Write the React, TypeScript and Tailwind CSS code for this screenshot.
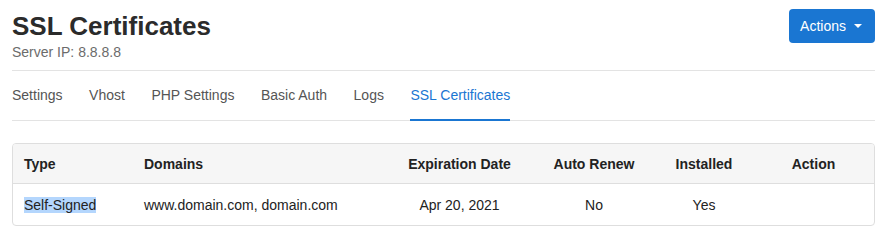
export default function App() {
  const tabs = ["Settings", "Vhost", "PHP Settings", "Basic Auth", "Logs", "SSL Certificates"];
  const active = "SSL Certificates";

  return (
    <div className="min-h-screen bg-white pl-3 pr-[14px] font-['Liberation_Sans',Arial,sans-serif] text-[#222]">
      {/* Header */}
      <div className="flex items-start justify-between border-b border-[#e3e3e3] pb-[8px]">
        <div className="pt-[11px]">
          <h1 className="text-[26px] font-bold leading-[31px] text-[#2b2b2b]">SSL Certificates</h1>
          <p className="text-sm leading-5 text-[#6b6b6b]">Server IP: 8.8.8.8</p>
        </div>
        <button className="mt-[9px] flex h-[34px] items-center gap-[8px] rounded bg-[#1a76d2] pl-[11px] pr-[13px] text-sm text-white">
          Actions
          <span className="h-0 w-0 border-x-4 border-t-4 border-x-transparent border-t-white" />
        </button>
      </div>

      {/* Tabs */}
      <nav className="mt-[14px] flex gap-[26.5px] border-b border-[#e3e3e3]">
        {tabs.map((t) => (
          <span
            key={t}
            className={
              t === active
                ? "-mb-px border-b-2 border-[#1a76d2] pb-[14px] text-sm leading-5 text-[#1a76d2]"
                : "pb-[15px] text-sm leading-5 text-[#555]"
            }
          >
            {t}
          </span>
        ))}
      </nav>

      {/* Table */}
      <div className="mt-[22px] overflow-hidden rounded border border-[#dedede] text-sm">
        <div className="grid h-[40px] grid-cols-[119px_263px_129px_140px_80px_130px] items-center border-b border-[#dedede] bg-[#f6f6f6] font-bold leading-5 text-[#222]">
          <div className="pl-[11px]">Type</div>
          <div className="pl-3">Domains</div>
          <div className="text-center">Expiration Date</div>
          <div className="text-center">Auto Renew</div>
          <div className="text-center">Installed</div>
          <div className="pl-[9px] text-center">Action</div>
        </div>
        <div className="grid h-[41px] grid-cols-[119px_263px_129px_140px_80px_130px] items-center leading-5 text-[#222]">
          <div className="pl-[11px]">
            <span className="bg-[#b4d6fd]">Self-Signed</span>
          </div>
          <div className="pl-3">www.domain.com, domain.com</div>
          <div className="text-center">Apr 20, 2021</div>
          <div className="text-center">No</div>
          <div className="text-center">Yes</div>
          <div />
        </div>
      </div>
    </div>
  );
}
